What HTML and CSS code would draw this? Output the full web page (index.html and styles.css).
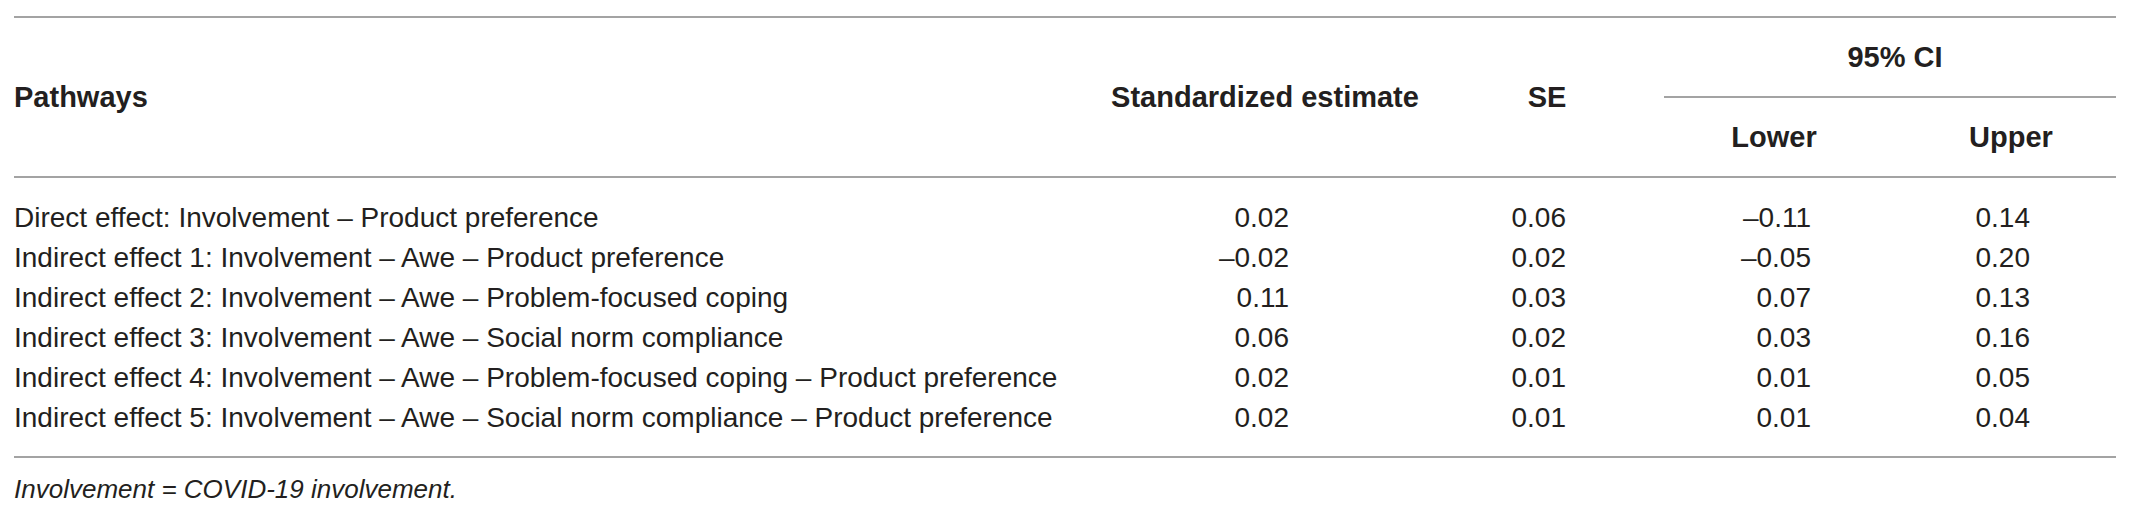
FILE: index.html
```html
<!DOCTYPE html>
<html lang="en">
<head>
<meta charset="utf-8">
<title>Pathways table</title>
<link rel="stylesheet" href="styles.css">
</head>
<body>
<div class="wrap">
  <table class="stats">
    <colgroup>
      <col class="c-path">
      <col class="c-est">
      <col class="c-se">
      <col class="c-low">
      <col class="c-up">
    </colgroup>
    <thead>
      <tr class="h1">
        <th rowspan="2" class="th-path">Pathways</th>
        <th rowspan="2" class="th-est">Standardized estimate</th>
        <th rowspan="2" class="th-se">SE</th>
        <th colspan="2" class="th-ci">95% CI</th>
      </tr>
      <tr class="h2">
        <th class="th-low">Lower</th>
        <th class="th-up">Upper</th>
      </tr>
    </thead>
    <tbody>
      <tr>
        <td class="path">Direct effect: Involvement – Product preference</td>
        <td class="n est">0.02</td><td class="n se">0.06</td><td class="n low">–0.11</td><td class="n up">0.14</td>
      </tr>
      <tr>
        <td class="path">Indirect effect 1: Involvement – Awe – Product preference</td>
        <td class="n est">–0.02</td><td class="n se">0.02</td><td class="n low">–0.05</td><td class="n up">0.20</td>
      </tr>
      <tr>
        <td class="path">Indirect effect 2: Involvement – Awe – Problem-focused coping</td>
        <td class="n est">0.11</td><td class="n se">0.03</td><td class="n low">0.07</td><td class="n up">0.13</td>
      </tr>
      <tr>
        <td class="path">Indirect effect 3: Involvement – Awe – Social norm compliance</td>
        <td class="n est">0.06</td><td class="n se">0.02</td><td class="n low">0.03</td><td class="n up">0.16</td>
      </tr>
      <tr>
        <td class="path">Indirect effect 4: Involvement – Awe – Problem-focused coping – Product preference</td>
        <td class="n est">0.02</td><td class="n se">0.01</td><td class="n low">0.01</td><td class="n up">0.05</td>
      </tr>
      <tr>
        <td class="path">Indirect effect 5: Involvement – Awe – Social norm compliance – Product preference</td>
        <td class="n est">0.02</td><td class="n se">0.01</td><td class="n low">0.01</td><td class="n up">0.04</td>
      </tr>
    </tbody>
  </table>
  <p class="note">Involvement = COVID-19 involvement.</p>
</div>
</body>
</html>
```
FILE: styles.css
```css
html, body {
  margin: 0;
  padding: 0;
  background: #ffffff;
}

body {
  font-family: "Liberation Sans", Arial, Helvetica, sans-serif;
  color: #231f20;
}

.wrap {
  padding: 16px 22px 0 14px;
}

.stats {
  width: 2102px;
  table-layout: fixed;
  border-collapse: separate;
  border-spacing: 0;
}

.c-path { width: 1086px; }
.c-est  { width: 330px; }
.c-se   { width: 234px; }
.c-low  { width: 220px; }
.c-up   { width: 232px; }

.stats th {
  font-size: 29px;
  font-weight: bold;
  line-height: 34px;
  padding: 0;
  vertical-align: middle;
  text-align: center;
}

.stats .h1 th {
  border-top: 2px solid #a3a3a3;
}

.stats .th-path,
.stats .th-est,
.stats .th-se {
  border-bottom: 2px solid #a3a3a3;
}

.stats .th-path {
  text-align: left;
}

.stats .th-ci {
  height: 78px;
  padding-left: 10px;
  border-bottom: 2px solid #a3a3a3;
}

.stats .h2 th {
  height: 78px;
  border-bottom: 2px solid #a3a3a3;
}

.stats .th-up {
  padding-left: 22px;
}

.stats td {
  font-size: 28px;
  line-height: 40px;
  padding: 0;
  white-space: nowrap;
}

.stats tbody tr:first-child td {
  padding-top: 20px;
}

.stats tbody tr:last-child td {
  padding-bottom: 18px;
  border-bottom: 2px solid #a3a3a3;
}

.stats .path {
  text-align: left;
}

.stats .n {
  text-align: right;
}

.stats .est { padding-right: 141px; }
.stats .se  { padding-right: 98px; }
.stats .low { padding-right: 73px; }
.stats .up  { padding-right: 86px; }

.note {
  margin: 14px 0 0 0;
  font-size: 26px;
  font-style: italic;
  line-height: 34px;
}
```
